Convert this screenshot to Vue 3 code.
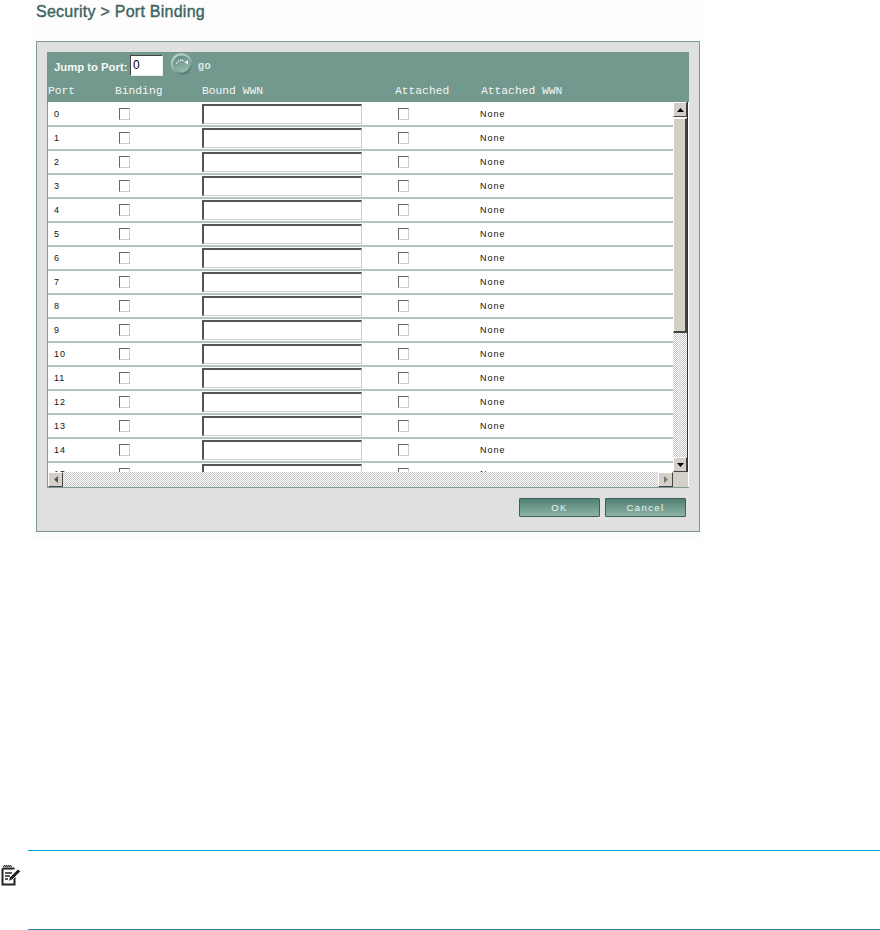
<script setup>
const ports = Array.from({ length: 16 }, (_, i) => i)
</script>

<template>
  <div class="page">
    <div class="shot">
      <h1 class="title">Security &gt; Port Binding</h1>
      <section class="panel">
        <div class="inner">
          <div class="head">
            <div class="jump">
              <span class="jump-label">Jump to Port:</span>
              <input class="jump-input" value="0" />
              <svg class="go-icon" width="23" height="22" viewBox="0 0 23 22">
                <defs>
                  <linearGradient id="goRim" x1="0.2" y1="0" x2="0.7" y2="1">
                    <stop offset="0" stop-color="#c4d8d2" />
                    <stop offset="0.55" stop-color="#8fb0a6" />
                    <stop offset="1" stop-color="#4a766b" />
                  </linearGradient>
                  <linearGradient id="goFace" x1="0.2" y1="0" x2="0.6" y2="1">
                    <stop offset="0" stop-color="#5f8b80" />
                    <stop offset="1" stop-color="#9bbab0" />
                  </linearGradient>
                </defs>
                <circle cx="11.5" cy="11" r="10.8" fill="url(#goRim)" />
                <circle cx="11.5" cy="11" r="8.5" fill="url(#goFace)" />
                <path d="M14.5 9l3.5-1.5v4z" fill="#fff" />
                <g fill="#fff"><rect x="6" y="9.5" width="1.4" height="1.2" /><rect x="8" y="7.5" width="1.4" height="1.2" /><rect x="10" y="6.5" width="1.4" height="1.2" /><rect x="12" y="7" width="1.4" height="1.2" /></g>
              </svg>
              <span class="go-label">go</span>
            </div>
            <div class="cols">
              <span>Port</span><span>Binding</span><span>Bound WWN</span><span>Attached</span><span>Attached WWN</span>
            </div>
          </div>
          <div class="table">
            <div class="body">
              <div v-for="p in ports" :key="p" class="row">
                <span class="cell">{{ p }}</span>
                <span class="check"></span>
                <span class="wwn"></span>
                <span class="check"></span>
                <span class="cell">None</span>
              </div>
            </div>
            <div class="vbar">
              <div class="sbtn"><svg width="7" height="4" viewBox="0 0 7 4"><path d="M3.5 0L7 4H0z" fill="#000" /></svg></div>
              <div class="vthumb"></div>
              <div class="track"></div>
              <div class="sbtn"><svg width="7" height="4" viewBox="0 0 7 4"><path d="M0 0h7L3.5 4z" fill="#000" /></svg></div>
            </div>
            <div class="hbar">
              <div class="sbtn"><svg width="4" height="7" viewBox="0 0 4 7"><path d="M4 0v7L0 3.5z" fill="#555" /></svg></div>
              <div class="track"></div>
              <div class="sbtn"><svg width="4" height="7" viewBox="0 0 4 7"><path d="M0 0v7l4-3.5z" fill="#777" /></svg></div>
            </div>
            <div class="corner"></div>
          </div>
        </div>
        <div class="actions">
          <button class="btn">OK</button>
          <button class="btn">Cancel</button>
        </div>
      </section>
    </div>
    <div class="note">
      <svg class="note-icon" width="20" height="22" viewBox="0 0 20 22">
        <path d="M1.5 4.5h12M1.5 4.5v16h12v-8" fill="none" stroke="#222" stroke-width="2" />
        <path d="M2.5 3l1-2 1 2 1-2 1 2 1-2 1 2 1-2 1 2" fill="none" stroke="#222" stroke-width="1" />
        <path d="M4 9h7M4 12h5M4 15h3" stroke="#222" stroke-width="1.4" />
        <path d="M7.5 17.5l1-4L17 5l2.5 2.5-8 8z" fill="#222" stroke="#fff" stroke-width="0.8" />
      </svg>
    </div>
  </div>
</template>

<style>
html, body { background: #fff; }
</style>

<style scoped>
.page {
  width: 880px;
  height: 930px;
  position: relative;
  overflow: hidden;
  font-family: "Liberation Sans", Arial, sans-serif;
  display: flex;
  flex-direction: column;
}
.shot {
  margin-left: 30px;
  width: 673px;
  height: 540px;
  background: #fcfdfc;
  padding: 0 0 0 6px;
  box-sizing: border-box;
}
.title {
  margin: 0;
  height: 41px;
  padding-top: 3px;
  box-sizing: border-box;
  font-size: 16px;
  line-height: 18px;
  font-weight: 400;
  letter-spacing: 0.25px;
  color: #3d6461;
  -webkit-text-stroke: 0.4px #3d6461;
}
.panel {
  width: 664px;
  height: 491px;
  box-sizing: border-box;
  border: 1px solid #7f9a94;
  background: #e0e0e0;
  padding: 10px 10px 0;
}
.inner {
  width: 642px;
  border-bottom: 1px solid #7f9a94;
  border-left: 1px solid #7f9a94;
  box-sizing: border-box;
}
.head {
  height: 50px;
  margin-left: -1px;
  background: #73988e;
  box-sizing: border-box;
  padding-top: 1px;
}
.jump {
  display: flex;
  align-items: flex-start;
  height: 23px;
  padding-left: 7px;
}
.jump-label {
  width: 76px;
  flex: none;
  white-space: nowrap;
  font-size: 11.3px;
  line-height: 13px;
  font-weight: 700;
  color: #f4f8f6;
  margin-top: 8px;
}
.jump-input {
  flex: none;
  width: 33px;
  height: 21px;
  box-sizing: border-box;
  border: 1px solid #e4ece9;
  border-top-color: #444;
  border-left-color: #444;
  background: #fff;
  font: 12px "Liberation Sans", sans-serif;
  padding: 0 0 2px 2px;
  margin-top: 2px;
  color: #000;
  outline: none;
}
.go-icon { margin-left: 7px; flex: none; }
.go-label {
  margin-left: 5px;
  margin-top: 7px;
  font-size: 10px;
  line-height: 12px;
  font-weight: 700;
  letter-spacing: 0.4px;
  color: #dfe9e6;
}
.cols {
  display: grid;
  grid-template-columns: 67px 87px 193px 86px 1fr;
  margin-top: 7px;
  padding-left: 1px;
  font: 11.3px/16px "Liberation Mono", monospace;
  color: #f2f6f4;
}
.table {
  display: grid;
  grid-template-columns: 625px 15px;
  grid-template-rows: 370px 15px;
  background: #fff;
}
.body {
  overflow: hidden;
  background: #fff;
  padding-top: 0.6px;
}
.row {
  display: grid;
  grid-template-columns: 65px 83px 196px 82px 1fr;
  align-items: center;
  height: 24.05px;
  box-sizing: border-box;
  padding-left: 6px;
  border-bottom: 2px solid #adc8c2;
}
.cell {
  font-size: 9px;
  letter-spacing: 1px;
  color: #111;
}
.check {
  width: 11px;
  height: 12px;
  box-sizing: border-box;
  border: 1px solid #ccc;
  border-top-color: #666;
  border-left-color: #666;
  background: #fff;
}
.wwn {
  width: 160px;
  height: 20px;
  box-sizing: border-box;
  border: 1px solid #ccc;
  border-top: 2px solid #555;
  border-left: 2px solid #555;
  background: #fff;
}
.vbar {
  display: flex;
  flex-direction: column;
  border-right: 1px solid #333;
  box-sizing: border-box;
}
.hbar {
  display: flex;
  align-items: stretch;
}
.sbtn {
  flex: none;
  width: 15px;
  height: 15px;
  display: flex;
  align-items: center;
  justify-content: center;
  box-sizing: border-box;
  background: #d4d0c8;
  border: 1px solid #fff;
  border-right-color: #444;
  border-bottom-color: #444;
}
.vbar .sbtn { width: 100%; }
.vthumb {
  flex: none;
  height: 215px;
  margin-top: 1px;
  background: #d4d0c8;
  box-sizing: border-box;
  border: 1px solid #fff;
  border-right: 2px solid #444;
  border-bottom: 2px solid #444;
}
.track {
  flex: 1;
  background: repeating-conic-gradient(#c8c8c8 0 25%, #fff 0 50%) 0 0 / 2px 2px;
}
.corner { background: #d4d0c8; }
.actions {
  display: flex;
  justify-content: flex-end;
  gap: 5px;
  margin-top: 10px;
  padding-right: 3px;
}
.btn {
  width: 81px;
  height: 19px;
  padding: 0;
  box-sizing: border-box;
  border: 1px solid #3c5f56;
  border-radius: 1px;
  background: linear-gradient(#4f8174, #8db3a6);
  color: #eef4f2;
  font: 9.5px "Liberation Sans", sans-serif;
  letter-spacing: 1.4px;
}
.note {
  position: absolute;
  left: 28px;
  right: 0;
  top: 850px;
  height: 80px;
  box-sizing: border-box;
  border-top: 1px solid #00a3d9;
  border-bottom: 1px solid #2a86a8;
}
.note-icon {
  position: absolute;
  left: -27px;
  top: 13px;
}
</style>
